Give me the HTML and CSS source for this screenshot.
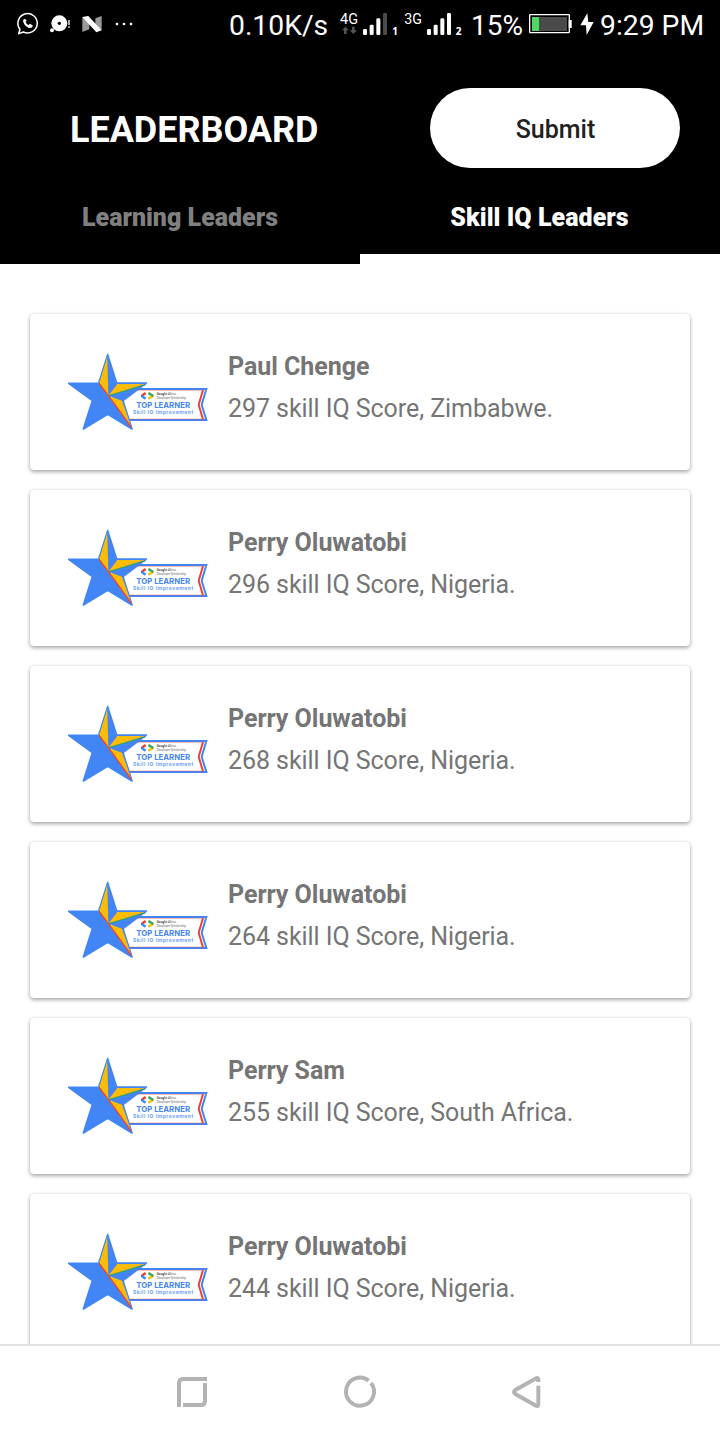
FILE: index.html
```html
<!DOCTYPE html>
<html lang="en">
<head>
<meta charset="utf-8">
<title>Leaderboard</title>
<link rel="stylesheet" href="styles.css">
</head>
<body>
<svg class="defs" width="0" height="0" aria-hidden="true">
  <symbol id="badge" viewBox="0 0 480 300">
    <path d="M236 147H439L425 194L439 240H204" fill="#fff" stroke="#4285f4" stroke-width="6"/>
    <path d="M234 151H430M430 237H208" fill="none" stroke="#ea4335" stroke-opacity=".6" stroke-width="2"/>
    <path d="M429 150L416 194L429 238" fill="none" stroke="#ea4335" stroke-width="6"/>
    <path d="M143 44L170 129H259L189 182L216 267L143 223L70 267L97 182L26 130H116Z" fill="#4285f4" stroke="#4285f4" stroke-width="5" stroke-linejoin="round"/>
    <path d="M142 50L118 129L145 167ZM172 132L254 132L145 167ZM145 167L186 182L213 259Z" fill="#fbbc05"/>
    <path d="M145 167L256 135" stroke="#34a853" stroke-width="3"/>
    <path d="M117 130L145 167L215 263" fill="none" stroke="#ea4335" stroke-width="4"/>
    <g fill="none" stroke-width="7">
      <path d="M257 159L244 168" stroke="#ea4335"/><path d="M244 167L257 176" stroke="#4285f4"/>
      <path d="M265 176L280 167" stroke="#fbbc05"/><path d="M265 159L280 168" stroke="#34a853"/>
    </g>
    <text class="b-tiny b-bold" x="290" y="165" textLength="31" lengthAdjust="spacingAndGlyphs">Google</text>
    <text class="b-tiny" x="324" y="165" textLength="24" lengthAdjust="spacingAndGlyphs">Africa</text>
    <text class="b-tiny" x="290" y="176" textLength="88" lengthAdjust="spacingAndGlyphs">Developer Scholarship</text>
    <text class="b-top" x="229" y="203" textLength="161" lengthAdjust="spacingAndGlyphs">TOP LEARNER</text>
    <text class="b-skill" x="219" y="221" textLength="181">Skill IQ Improvement</text>
  </symbol>
</svg>
<div class="screen">
  <div class="status">
    <svg class="notices" width="140" height="48" viewBox="0 0 420 144">
      <path d="M60 88A29 29 0 1 1 70 96L56 101Z" fill="none" stroke="#fff" stroke-width="4.5" stroke-linejoin="round"/>
      <path d="M75 56Q70 56 69 63Q72 78 87 84Q96 86 99 77L90 71L85 75Q79 72 77 66L80 62Z" fill="#fff"/>
      <circle cx="178" cy="70" r="24" fill="#fff"/><circle cx="156" cy="91" r="6" fill="#fff"/>
      <circle cx="178" cy="70" r="5" fill="#000"/>
      <path d="M207 60V75M207 79V84" stroke="#fff" stroke-width="4"/>
      <path d="M247 52L268 60V88L247 96ZM286 55L305 48V90L286 88Z" fill="#999"/>
      <path d="M247 51L265 48L305 91L289 97Z" fill="#fff"/>
      <g fill="#fff"><circle cx="351" cy="72" r="4"/><circle cx="372" cy="72" r="4"/><circle cx="393" cy="72" r="4"/></g>
    </svg>
    <span class="speed">0.10K/s</span>
    <svg class="signals" width="130" height="48" viewBox="0 0 390 144">
      <text class="net" x="0" y="71" textLength="54" lengthAdjust="spacingAndGlyphs">4G</text>
      <path d="M16 80L27 91H20V102H12V91H6ZM40 102L29 91H36V80H44V91H51Z" fill="#555"/>
      <g fill="#fff"><rect x="69" y="87" width="12" height="18" rx="4"/><rect x="89" y="74" width="12" height="31" rx="4"/><rect x="109" y="55" width="12" height="50" rx="4"/></g>
      <rect x="129" y="39" width="12" height="66" rx="4" fill="#4b4b4b"/>
      <text class="sim" x="157" y="104">1</text>
      <text class="net" x="193" y="71" textLength="53" lengthAdjust="spacingAndGlyphs">3G</text>
      <g fill="#fff"><rect x="261" y="87" width="12" height="18" rx="4"/><rect x="281" y="74" width="12" height="31" rx="4"/><rect x="301" y="55" width="12" height="50" rx="4"/><rect x="321" y="39" width="12" height="66" rx="4"/></g>
      <text class="sim" x="347" y="104">2</text>
    </svg>
    <span class="percent">15%</span>
    <svg class="battery" width="68" height="48" viewBox="0 0 204 144">
      <rect x="2" y="44" width="119" height="54" rx="2" fill="#000" stroke="#fff" stroke-width="4"/>
      <rect x="9" y="51" width="105" height="42" fill="#4b4b4b"/><rect x="9" y="51" width="21" height="42" fill="#4cd964"/>
      <rect x="119" y="60" width="9" height="24" fill="#fff"/>
      <path d="M175 40L154 76H171L173 105L194 66H178Z" fill="#fff"/>
    </svg>
    <span class="clock">9:29 PM</span>
  </div>
  <header class="header">
    <h1 class="title">LEADERBOARD</h1>
    <button class="submit">Submit</button>
  </header>
  <nav class="tabs">
    <div class="tab"><span class="learn">Learning Leaders</span></div>
    <div class="tab active"><span class="iq">Skill IQ Leaders</span></div>
  </nav>
  <main class="list">
    <article class="card"><svg class="badge"><use href="#badge"/></svg><div class="info"><h2 class="name">Paul Chenge</h2><p class="score">297 skill IQ Score, Zimbabwe.</p></div></article>
    <article class="card"><svg class="badge"><use href="#badge"/></svg><div class="info"><h2 class="name">Perry Oluwatobi</h2><p class="score">296 skill IQ Score, Nigeria.</p></div></article>
    <article class="card"><svg class="badge"><use href="#badge"/></svg><div class="info"><h2 class="name">Perry Oluwatobi</h2><p class="score">268 skill IQ Score, Nigeria.</p></div></article>
    <article class="card"><svg class="badge"><use href="#badge"/></svg><div class="info"><h2 class="name">Perry Oluwatobi</h2><p class="score">264 skill IQ Score, Nigeria.</p></div></article>
    <article class="card"><svg class="badge"><use href="#badge"/></svg><div class="info"><h2 class="name">Perry Sam</h2><p class="score">255 skill IQ Score, South Africa.</p></div></article>
    <article class="card"><svg class="badge"><use href="#badge"/></svg><div class="info"><h2 class="name">Perry Oluwatobi</h2><p class="score">244 skill IQ Score, Nigeria.</p></div></article>
  </main>
  <footer class="navbar">
    <svg width="400" height="94" viewBox="0 18 1200 282" fill="none" stroke="#b3b3b3" stroke-width="12">
      <path d="M57 201V129Q57 117 69 117H141M135 129V183Q135 195 123 195H69"/>
      <path d="M626 122A42 42 0 1 0 633 129"/>
      <path d="M1135 126V119Q1135 111 1126 116L1066 150Q1058 156 1066 162L1128 197Q1135 200 1135 192V137" stroke-linejoin="round"/>
    </svg>
  </footer>
</div>
</body>
</html>
```
FILE: styles.css
```css
* { box-sizing: border-box; }
body { margin: 0; font-family: Roboto, sans-serif; background: #fff; }
.defs { position: absolute; }
.screen { width: 720px; height: 1440px; display: flex; flex-direction: column; overflow: hidden; }
svg { display: block; flex: none; }

.status { height: 48px; flex: none; display: flex; background: #000; color: #fff; font-size: 28.3px; line-height: 51px; white-space: nowrap; }
.speed { width: 111px; margin-left: 89px; }
.percent { width: 58px; margin-left: 1px; font-size: 28px; }
.clock { margin-left: 3px; }
.net { font: 44px Roboto, sans-serif; fill: #fff; }
.sim { font: 700 30px "Noto Sans", sans-serif; fill: #fff; }

.header { height: 134px; flex: none; display: flex; justify-content: space-between; padding: 40px 40px 0 70px; background: #000; }
.title { margin: 0; color: #fff; font-size: 36px; font-weight: 700; line-height: 84px; letter-spacing: -0.03px; }
.submit { width: 250px; height: 80px; padding: 3px 0 0 1px; border: 0; border-radius: 40px; background: #fff; color: #212121; font: 500 25px Roboto, sans-serif; }

.tabs { height: 82px; flex: none; display: flex; background: #000; }
.tab { width: 360px; text-align: center; color: #808080; font-size: 25px; font-weight: 900; line-height: 72px; }
.tab.active { color: #fff; border-bottom: 10px solid #fff; }
.iq { letter-spacing: 0.05px; margin-right: 1px; }

.list { flex: 1; min-height: 0; overflow: hidden; display: flex; flex-direction: column; gap: 20px; padding: 50px 30px 0; }
.card { height: 156px; flex: none; display: flex; padding: 26px 30px 0; border-radius: 4px; background: #fff; box-shadow: 0 2px 4px rgba(0,0,0,.32), 0 0 3px rgba(0,0,0,.1); }
.badge { width: 160px; height: 100px; }
.info { padding: 11px 0 0 8px; white-space: nowrap; color: #757575; }
.name { margin: 0; font-size: 25px; font-weight: 700; line-height: 32px; letter-spacing: -0.03px; }
.score { margin: 10px 0 0; font-size: 25px; line-height: 32px; letter-spacing: -0.06px; }
.b-tiny { font: 10px "Open Sans", sans-serif; fill: #444; }
.b-bold { font-weight: 700; }
.b-top { font: 700 23px Inter, sans-serif; fill: #4285f4; }
.b-skill { font: 700 15px Inter, sans-serif; fill: #6b9ff6; }

.navbar { height: 96px; flex: none; border-top: 2px solid #e2e2e2; background: #fff; display: flex; justify-content: center; }
```
